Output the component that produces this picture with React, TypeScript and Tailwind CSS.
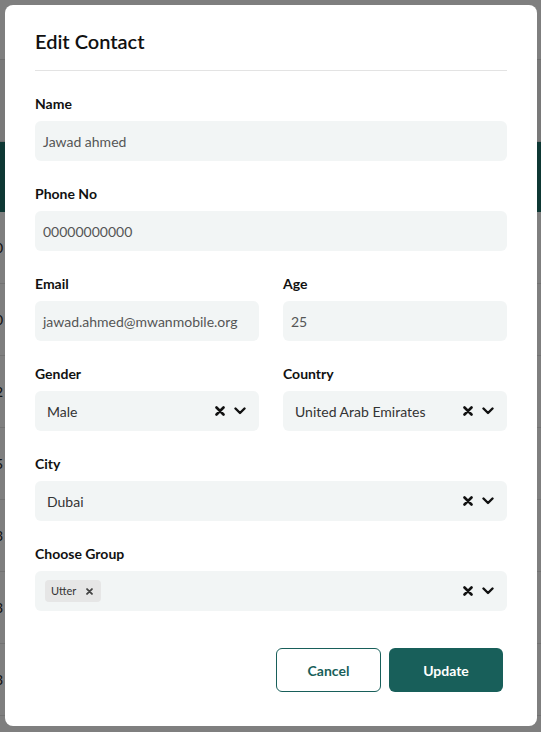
import React from "react";

const font = { fontFamily: 'Lato, "Noto Sans", Arial, sans-serif' };

function ClearIcon({ className = "" }: { className?: string }) {
  return (
    <svg viewBox="0 0 10 10" className={className} fill="none" stroke="currentColor" strokeWidth="2.6" strokeLinecap="round">
      <path d="M1.5 1.5l7 7M8.5 1.5l-7 7" />
    </svg>
  );
}

function ChevronIcon({ className = "" }: { className?: string }) {
  return (
    <svg viewBox="0 0 12 8" className={className} fill="none" stroke="currentColor" strokeWidth="2.4" strokeLinecap="round" strokeLinejoin="round">
      <path d="M1.5 1.5L6 6l4.5-4.5" />
    </svg>
  );
}

function Field({ label, value }: { label: string; value: string }) {
  return (
    <div className="flex flex-col">
      <label className="text-[14px] leading-5 font-bold text-[#111]">{label}</label>
      <div className="mt-[7px] h-10 rounded-md bg-[#f2f5f5] flex items-center px-2 text-[14px] text-[#555]">
        {value}
      </div>
    </div>
  );
}

function Indicators() {
  return (
    <div className="flex items-center gap-[9px] text-[#111]">
      <ClearIcon className="w-[10px] h-[10px]" />
      <ChevronIcon className="w-[12px] h-[8px]" />
    </div>
  );
}

function SelectField({ label, children }: { label: string; children: React.ReactNode }) {
  return (
    <div className="flex flex-col">
      <label className="text-[14px] leading-5 font-bold text-[#111]">{label}</label>
      <div className="mt-[7px] h-10 rounded-md bg-[#f2f5f5] flex items-center pl-3 pr-[13px] text-[14px] text-[#333]">
        <div className="flex-1 flex items-center min-w-0">{children}</div>
        <Indicators />
      </div>
    </div>
  );
}

// background page, only a sliver shows at the edges
function BackgroundPage() {
  const digits = ["0", "0", "2", "5", "3", "3", "3"];
  return (
    <div className="w-full h-[732px] bg-white overflow-hidden">
      <div className="h-[60px] border-b border-[#ddd]" />
      <div className="h-[82px] bg-[#f2f2f2] border-b border-[#ddd]" />
      <div className="h-[70px] bg-[#1d7068]" />
      {digits.map((d, i) => (
        <div key={i} className="h-[72px] border-b border-[#e5e5e5] flex items-center text-[14px] text-[#222] -ml-[5px]">
          {d}
        </div>
      ))}
    </div>
  );
}

export default function App() {
  return (
    <div className="relative w-[541px] h-[732px] overflow-hidden" style={font}>
      <BackgroundPage />
      <div className="absolute inset-0 bg-black/50">
        <div className="absolute left-[5px] top-[5px] w-[532px] h-[721px] bg-white rounded-lg px-[30px] pt-[22px]">
          <h2 className="text-[20px] leading-7 font-semibold text-[#111] pb-[15px] border-b border-[#e3e3e3]">
            Edit Contact
          </h2>

          <div className="mt-[23px] flex flex-col gap-[23px]">
            <Field label="Name" value="Jawad ahmed" />
            <Field label="Phone No" value="00000000000" />
            <div className="grid grid-cols-2 gap-6">
              <Field label="Email" value="jawad.ahmed@mwanmobile.org" />
              <Field label="Age" value="25" />
            </div>
            <div className="grid grid-cols-2 gap-6">
              <SelectField label="Gender">Male</SelectField>
              <SelectField label="Country">United Arab Emirates</SelectField>
            </div>
            <SelectField label="City">Dubai</SelectField>
            <div className="flex flex-col">
              <label className="text-[14px] leading-5 font-bold text-[#111]">Choose Group</label>
              <div className="mt-[7px] h-10 rounded-md bg-[#f2f5f5] flex items-center pl-[10px] pr-[13px]">
                <div className="flex-1 flex items-center">
                  <span className="h-[22px] flex items-center gap-[10px] bg-[#e6e6e6] rounded-sm pl-[6px] pr-2 text-[11px] text-[#333]">
                    Utter
                    <ClearIcon className="w-[7px] h-[7px] text-[#444]" />
                  </span>
                </div>
                <Indicators />
              </div>
            </div>
          </div>

          <div className="mt-[37px] flex justify-end gap-2 pr-1">
            <button className="w-[105px] h-11 rounded-md border border-[#185f5a] text-[#185f5a] text-[14px] font-bold bg-white">
              Cancel
            </button>
            <button className="w-[114px] h-11 rounded-md bg-[#185f5a] text-white text-[14px] font-bold">
              Update
            </button>
          </div>
        </div>
      </div>
    </div>
  );
}
